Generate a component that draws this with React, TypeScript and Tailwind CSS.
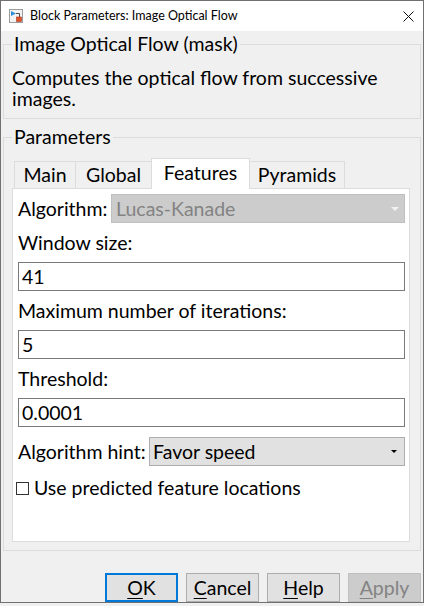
import React from "react";

// Simulink-style block parameters dialog

function BlockIcon() {
  return (
    <svg width="14" height="14" viewBox="0 0 14 14">
      <rect x="0.5" y="0.5" width="13" height="13" fill="#f2f2f2" stroke="#9c9c9c" />
      <path d="M2 2 L7 4.5 L2 7 Z" fill="#2d8fd6" />
      <path d="M7 4.5 H10.5 V8" stroke="#4a4a4a" fill="none" strokeWidth="1" />
      <rect x="7.5" y="8" width="5" height="4.5" fill="#e0522b" stroke="#a8391c" strokeWidth="0.6" />
    </svg>
  );
}

function CloseIcon() {
  return (
    <svg width="11" height="11" viewBox="0 0 11 11">
      <path d="M0.5 0.5 L10.5 10.5 M10.5 0.5 L0.5 10.5" stroke="#111" strokeWidth="1" />
    </svg>
  );
}

function Arrow({ color, w, h }: { color: string; w: number; h: number }) {
  return (
    <svg width={w} height={h} viewBox={`0 0 ${w} ${h}`}>
      <path d={`M0 0 H${w} L${w / 2} ${h} Z`} fill={color} />
    </svg>
  );
}

function Label({ children }: { children: React.ReactNode }) {
  return <div className="pt-[8px] pb-[7px] leading-[24px] whitespace-nowrap">{children}</div>;
}

function Field({ value }: { value: string }) {
  return (
    <div className="h-[29px] border border-[#7a7a7a] bg-white flex items-center pl-[3px]">
      {value}
    </div>
  );
}

const tabs = [
  { name: "Main", w: "w-[62px]" },
  { name: "Global", w: "w-[77px]" },
  { name: "Features", w: "w-[99px]", active: true },
  { name: "Pyramids", w: "w-[96px]" },
];

function Btn({ first, rest, focused, disabled }: { first: string; rest: string; focused?: boolean; disabled?: boolean }) {
  let cls = "w-[73px] h-[29px] flex items-center justify-center border bg-[#e1e1e1] border-[#adadad] text-black";
  if (focused) cls = "w-[73px] h-[29px] flex items-center justify-center border-2 bg-[#e1e1e1] border-[#0078d7] text-black";
  if (disabled) cls = "w-[73px] h-[29px] flex items-center justify-center border bg-[#cccccc] border-[#bfbfbf] text-[#838383]";
  return (
    <div className={cls}>
      <span className="leading-[24px]">
        <span className="underline underline-offset-[3px] decoration-1">{first}</span>
        {rest}
      </span>
    </div>
  );
}

export default function App() {
  return (
    <div className="w-[424px] h-[606px] bg-[#f0f0f0] font-['Lato',sans-serif] text-[19.5px] text-black">
      <div className="w-[424px] h-[603px] border border-[#707070] flex flex-col">
        <div className="h-[30px] bg-white flex items-center pl-[8px] pr-[9px] shrink-0">
          <BlockIcon />
          <span className="ml-[7px] text-[12.5px] leading-none">Block Parameters: Image Optical Flow</span>
          <div className="ml-auto flex items-center">
            <CloseIcon />
          </div>
        </div>

        <fieldset className="mt-[2px] mx-[2px] border border-[#dcdcdc] pl-[8px] pr-[8px] pt-[12px] pb-[9px]">
          <legend className="px-[2px] leading-[22px]">Image Optical Flow (mask)</legend>
          <p className="leading-[21px]">Computes the optical flow from successive images.</p>
        </fieldset>

        <fieldset className="mt-[7px] mx-[2px] border border-[#dcdcdc] pl-[8px] pr-[10px] pt-[10px] pb-[8px]">
          <legend className="px-[2px] leading-[22px]">Parameters</legend>

          <div className="flex items-end pl-[2px]">
            {tabs.map((t) =>
              t.active ? (
                <div
                  key={t.name}
                  className={`${t.w} h-[31px] -mb-px -ml-px relative z-10 bg-white border-t border-l border-r border-[#dcdcdc] flex justify-center pt-[2px] leading-[24px]`}
                >
                  {t.name}
                </div>
              ) : (
                <div
                  key={t.name}
                  className={`${t.w} h-[27px] -ml-px first:ml-0 bg-[#f0f0f0] border-t border-l border-r border-[#dcdcdc] flex justify-center pt-[1px] leading-[24px]`}
                >
                  {t.name}
                </div>
              )
            )}
          </div>

          <div className="h-[354px] bg-white border border-[#dcdcdc] pl-[5px] pr-[4px] pt-[5px]">
            <div className="h-[29px] flex items-center">
              <div className="w-[93px] whitespace-nowrap leading-[24px]">Algorithm:</div>
              <div className="flex-1 h-[29px] bg-[#cccccc] border border-[#bfbfbf] text-[#838383] flex items-center pl-[4px] pr-[5px]">
                <span className="leading-[24px]">Lucas-Kanade</span>
                <div className="ml-auto flex">
                  <Arrow color="#f2f2f2" w={8} h={4} />
                </div>
              </div>
            </div>

            <Label>Window size:</Label>
            <Field value="41" />
            <Label>Maximum number of iterations:</Label>
            <Field value="5" />
            <Label>Threshold:</Label>
            <Field value="0.0001" />

            <div className="h-[29px] flex items-center mt-[10px]">
              <div className="w-[131px] whitespace-nowrap leading-[24px]">Algorithm hint:</div>
              <div className="flex-1 h-[29px] bg-[#e1e1e1] border border-[#adadad] flex items-center pl-[3px] pr-[7px]">
                <span className="leading-[24px]">Favor speed</span>
                <div className="ml-auto flex">
                  <Arrow color="#000" w={6} h={3} />
                </div>
              </div>
            </div>

            <div className="h-[24px] flex items-center mt-[10px] -ml-[2px]">
              <div className="w-[13px] h-[13px] border border-[#333333] bg-white" />
              <span className="ml-[5px] leading-[24px] whitespace-nowrap">Use predicted feature locations</span>
            </div>
          </div>
        </fieldset>

        <div className="mt-[22px] flex justify-end gap-[8px] pr-[2px]">
          <Btn first="O" rest="K" focused />
          <Btn first="C" rest="ancel" />
          <Btn first="H" rest="elp" />
          <Btn first="A" rest="pply" disabled />
        </div>
      </div>
    </div>
  );
}
